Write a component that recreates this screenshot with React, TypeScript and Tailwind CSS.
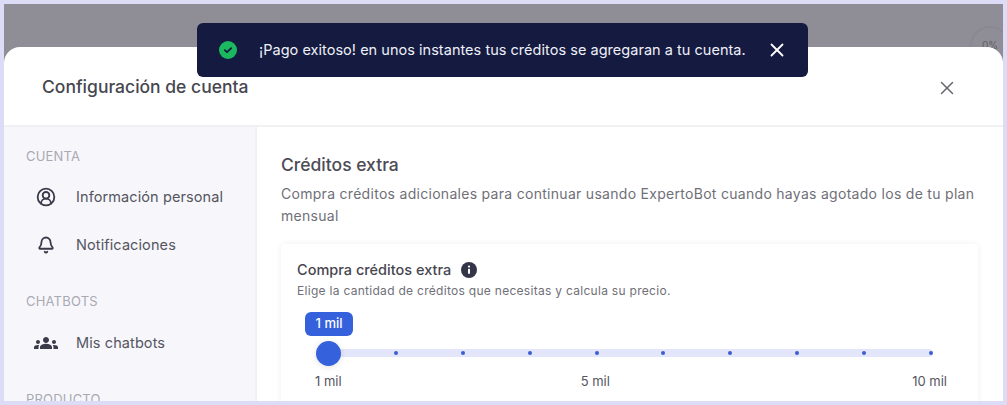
import { X, Bell, CircleUserRound } from "lucide-react";
import { MdGroups } from "react-icons/md";

const ticks = [0, 1, 2, 3, 4, 5, 6, 7, 8, 9];

function SectionLabel({ children }: { children: string }) {
  return <p className="text-[13px] leading-5 tracking-[0.2px] text-[#a9a9b3]">{children}</p>;
}

function MenuItem({ icon, label }: { icon: React.ReactNode; label: string }) {
  return (
    <div className="flex h-12 items-center">
      <div className="flex w-[50px] justify-center pr-[11px] text-[#3a3a4a]">{icon}</div>
      <span className="text-[14.5px] tracking-[0.1px] text-[#55555f]">{label}</span>
    </div>
  );
}

function Toast() {
  return (
    <div className="absolute left-[197px] top-[23px] z-10 flex h-[54px] w-[611px] items-center rounded-md bg-[#151a40] pl-[22px] text-white">
      <svg width="18" height="18" viewBox="0 0 18 18" className="shrink-0">
        <circle cx="9" cy="9" r="9" fill="#1cb85f" />
        <path d="M5.8 9.2l2.2 2 4.2-4" fill="none" stroke="#151a40" strokeWidth="1.8" strokeLinecap="round" strokeLinejoin="round" />
      </svg>
      <span className="ml-[22px] whitespace-nowrap text-[14.5px] tracking-[0.03px] text-[#eef0f8]">
        ¡Pago exitoso! en unos instantes tus créditos se agregaran a tu cuenta.
      </span>
      <X size={22} strokeWidth={2} className="ml-[20px] shrink-0 text-white" />
    </div>
  );
}

function Slider() {
  return (
    <div className="mt-[50px] pl-[31px] pr-[29px]">
      <div className="relative flex h-2 items-center justify-between rounded-sm bg-[#e3e6fa]">
        {ticks.map((t) => (
          <span key={t} className={t === 0 ? "h-[3px] w-[3px]" : "h-[4px] w-[4px] rounded-full bg-[#3b5fd0]"} />
        ))}
        <div className="absolute left-[-12px] top-[-8px] h-[25px] w-[25px] rounded-full bg-[#3561dc] shadow-[0_1px_6px_rgba(0,0,0,0.12)]" />
        <div className="absolute left-[-23px] top-[-37px] flex h-6 w-12 items-center justify-center rounded-md bg-[#3561dc] text-[13px] font-medium text-white">
          1 mil
        </div>
      </div>
      <div className="mt-[14px] flex text-[13px] leading-5 text-[#55555f]">
        <span className="ml-[-13px]">1 mil</span>
        <span className="ml-[239px]">5 mil</span>
        <span className="ml-auto mr-[-14px]">10 mil</span>
      </div>
    </div>
  );
}

export default function App() {
  return (
    <div className="h-[405px] w-[1007px] overflow-hidden bg-[#dcdcf6] p-1 font-['Inter',sans-serif]">
      <div className="relative h-[397px] overflow-hidden bg-[#8f8e96] pt-[43px]">
        <div className="absolute right-[-7px] top-[22px] flex h-10 w-10 items-start justify-center rounded-full border-2 border-[#8a8991] pt-[11px] text-[10px] leading-3 text-[#5f5f66]">
          0%
        </div>
        <div className="relative flex h-[354px] flex-col overflow-hidden rounded-t-2xl bg-white">
          <header className="flex h-[80px] shrink-0 items-center justify-between border-b-2 border-[#f1f1f4] pl-[38px] pr-[45px] pt-[3px]">
            <h1 className="text-[17.5px] font-medium text-[#46464f]">Configuración de cuenta</h1>
            <X size={22} strokeWidth={1.6} className="text-[#66666e]" />
          </header>
          <div className="flex min-h-0 flex-1">
            <aside className="w-[253px] shrink-0 border-r-2 border-[#f1f1f4] bg-[#f7f7fb] pl-[22px] pt-[19px]">
              <SectionLabel>CUENTA</SectionLabel>
              <div className="mt-[7px]">
                <MenuItem icon={<CircleUserRound size={20} strokeWidth={2.2} />} label="Información personal" />
                <MenuItem icon={<Bell size={18} strokeWidth={2.4} />} label="Notificaciones" />
              </div>
              <div className="mt-[22px]">
                <SectionLabel>CHATBOTS</SectionLabel>
              </div>
              <div className="mt-[8px]">
                <MenuItem icon={<MdGroups size={24} />} label="Mis chatbots" />
              </div>
              <div className="mt-[22px]">
                <SectionLabel>PRODUCTO</SectionLabel>
              </div>
            </aside>
            <main className="min-w-0 flex-1 pl-[24px] pr-[25px] pt-[26px]">
              <h2 className="text-[17.5px] font-medium leading-6 text-[#4c4c55]">Créditos extra</h2>
              <p className="mt-[6px] text-sm leading-[22px] tracking-[0.29px] text-[#6f6f78]">
                Compra créditos adicionales para continuar usando ExpertoBot cuando hayas agotado los de tu plan mensual
              </p>
              <section className="mt-[17px] h-[200px] rounded-sm bg-white px-4 pt-4 shadow-[0_0_6px_rgba(30,30,60,0.07)]">
                <div className="flex items-center">
                  <h3 className="text-[14.5px] font-medium leading-5 text-[#46464f]">Compra créditos extra</h3>
                  <svg width="16" height="16" viewBox="0 0 16 16" className="ml-[10px]">
                    <circle cx="8" cy="8" r="8" fill="#35354a" />
                    <circle cx="8" cy="4.6" r="1.1" fill="#fff" />
                    <rect x="7" y="6.8" width="2" height="5" rx="0.6" fill="#fff" />
                  </svg>
                </div>
                <p className="mt-[3px] text-xs leading-4 tracking-[0.29px] text-[#6f6f78]">
                  Elige la cantidad de créditos que necesitas y calcula su precio.
                </p>
                <Slider />
              </section>
            </main>
          </div>
        </div>
      </div>
      <Toast />
    </div>
  );
}
